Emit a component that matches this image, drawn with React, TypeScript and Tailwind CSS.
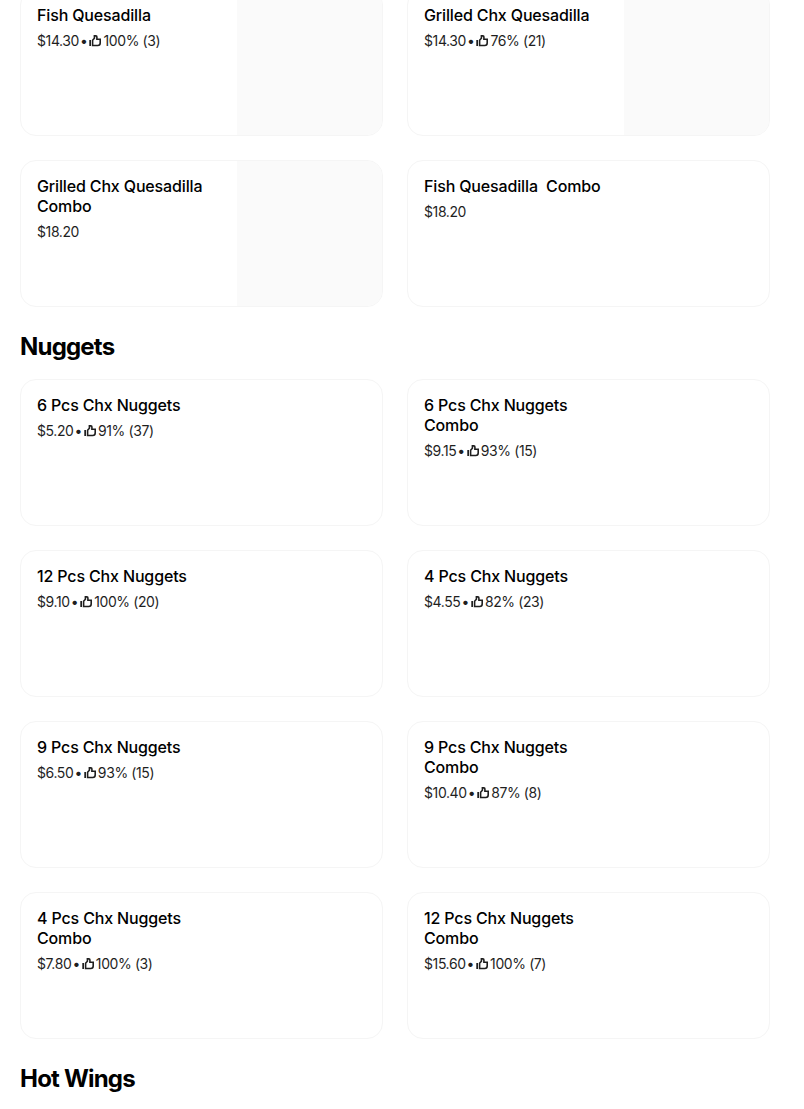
function Thumb() {
  return (
    <svg width="12" height="12" viewBox="0 0 12 12" className="shrink-0" fill="none">
      <path d="M0.3 5H2V11H0.3V5Z" fill="currentColor" />
      <path
        d="M3.6 5.2L5.4 3.2V0.9H6.9C7.5 0.9 7.9 1.4 7.9 2V4.2H11.2V8C11.2 9.5 10.1 10.5 8.7 10.5H3.6V5.2Z"
        stroke="currentColor"
        strokeWidth="1.6"
      />
    </svg>
  );
}

type Item = {
  name: string;
  price: string;
  rating?: string;
  image?: boolean;
};

function Card({ item }: { item: Item }) {
  return (
    <div className="flex h-[147px] overflow-hidden rounded-2xl border border-[#f5f5f5] bg-white">
      <div className="min-w-0 flex-1 px-4 py-[15px]">
        <div className="w-[190px] whitespace-pre-wrap text-base leading-5 font-medium tracking-[-0.15px] text-black">
          {item.name}
        </div>
        <div className="mt-[5px] flex items-center pt-[1px] text-sm leading-5 tracking-[-0.4px] text-[#1f1f1f]">
          <span>{item.price}</span>
          {item.rating && (
            <>
              <span className="ml-[1px] mr-[2px]">•</span>
              <Thumb />
              <span className="ml-[2px]">{item.rating}</span>
            </>
          )}
        </div>
      </div>
      {item.image && <div className="w-[145px] shrink-0 bg-[#fafafa]" />}
    </div>
  );
}

const quesadillas: Item[] = [
  { name: "Fish Quesadilla", price: "$14.30", rating: "100% (3)", image: true },
  { name: "Grilled Chx Quesadilla", price: "$14.30", rating: "76% (21)", image: true },
  { name: "Grilled Chx Quesadilla Combo", price: "$18.20", image: true },
  { name: "Fish Quesadilla  Combo", price: "$18.20" },
];

const nuggets: Item[] = [
  { name: "6 Pcs Chx Nuggets", price: "$5.20", rating: "91% (37)" },
  { name: "6 Pcs Chx Nuggets Combo", price: "$9.15", rating: "93% (15)" },
  { name: "12 Pcs Chx Nuggets", price: "$9.10", rating: "100% (20)" },
  { name: "4 Pcs Chx Nuggets", price: "$4.55", rating: "82% (23)" },
  { name: "9 Pcs Chx Nuggets", price: "$6.50", rating: "93% (15)" },
  { name: "9 Pcs Chx Nuggets Combo", price: "$10.40", rating: "87% (8)" },
  { name: "4 Pcs Chx Nuggets Combo", price: "$7.80", rating: "100% (3)" },
  { name: "12 Pcs Chx Nuggets Combo", price: "$15.60", rating: "100% (7)" },
];

function CardGrid({ items }: { items: Item[] }) {
  return (
    <div className="grid grid-cols-[363px_363px] gap-x-6 gap-y-6">
      {items.map((item) => (
        <Card key={item.name} item={item} />
      ))}
    </div>
  );
}

export default function App() {
  return (
    <div className="h-[1109px] overflow-hidden bg-white px-5 font-['Inter',sans-serif]">
      <div className="-mt-[11px]">
        <CardGrid items={quesadillas} />
      </div>
      <h2 className="mt-6 mb-4 text-2xl leading-8 font-bold tracking-[-0.8px] text-black">Nuggets</h2>
      <CardGrid items={nuggets} />
      <h2 className="mt-6 text-2xl leading-8 font-bold tracking-[-0.8px] text-black">Hot Wings</h2>
    </div>
  );
}
